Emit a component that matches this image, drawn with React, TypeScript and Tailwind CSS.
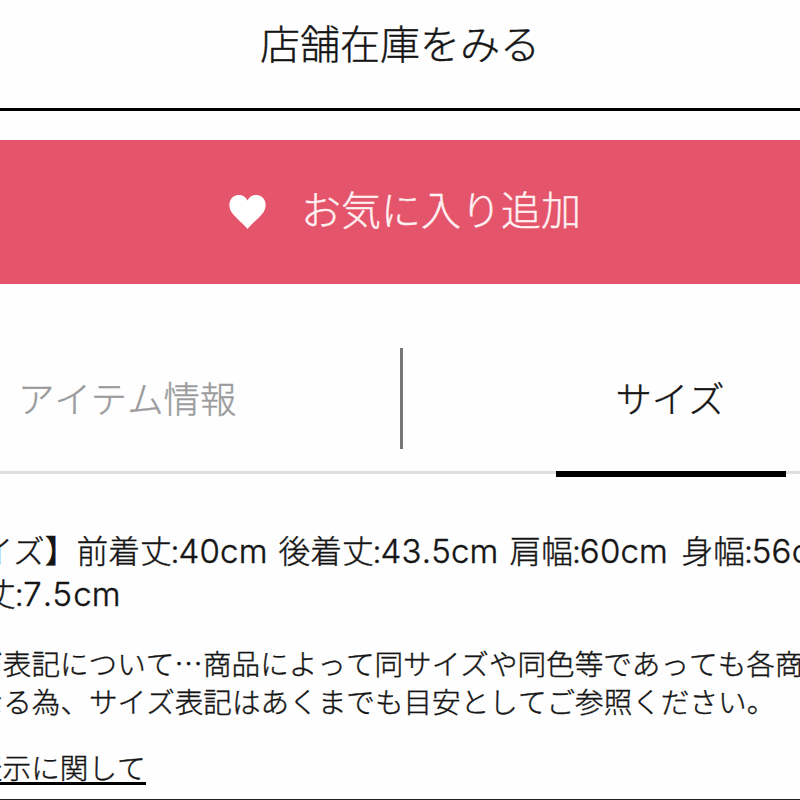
import React from 'react'

const sizeList = [
  { id: '1', label: '前着丈', value: '40cm', width: 'w-[202px]' },
  { id: '2', label: '後着丈', value: '43.5cm', width: 'w-[231px]' },
  { id: '3', label: '肩幅', value: '60cm', width: 'w-[172px]' },
  { id: '4', label: '身幅', value: '56cm', width: 'w-[172px]' },
]

function FavoriteButton() {
  return (
    <button className="mt-[29px] flex h-[143.5px] w-full items-center bg-[#e4546a] pl-[229px] text-[40px] font-light leading-[60px] text-[#fff0f2]">
      <svg className="h-[34px] w-[37px] text-white" viewBox="0 0 37 34" fill="currentColor">
        <path d="M18.5 34C15 29.500 8 24 3.500 18.500C0 14 -.3 9 1.300 5.500C3.200 1.500 6.500 0 10 0C14 0 17 2 18.500 5.500C20 2 23 0 27 0C30.500 0 33.800 1.500 35.700 5.500C37.300 9 37 14 33.500 18.500C29 24 22 29.500 18.500 34Z" />
      </svg>
      <span className="mb-[7px] ml-[35px]">お気に入り追加</span>
    </button>
  )
}

function Tabs() {
  return (
    <div className="mt-[64.5px] flex h-[126px] border-b-[3px] border-[#e0e0e0] text-[36.4px] font-light leading-[54px]">
      <div className="w-[400px] pl-[18px] pt-[22px] text-[#9b9b9d]">アイテム情報</div>
      <div className="h-[101px] w-[3px] bg-[#777]" />
      <div className="ml-[153px] h-[129px] w-[230px] border-b-[6px] border-black pr-[2px] pt-[22px] text-center">サイズ</div>
    </div>
  )
}

function App() {
  return (
    <main
      lang="ja"
      className="flex h-[800px] w-[800px] flex-col overflow-hidden whitespace-nowrap border-b border-[#222] bg-[#fefefe] font-['Noto_Sans_CJK_JP',sans-serif] text-[#151515] [-webkit-text-stroke:0.4px] [font-kerning:none]"
    >
      <div className="h-[111px] border-b-[3px] border-black pt-[11.5px] text-center text-[40px] font-light leading-[60px]">
        店舗在庫をみる
      </div>
      <FavoriteButton />
      <Tabs />
      <div className="ml-[-82px] mt-[56px] font-[Inter,'Noto_Sans_CJK_JP',sans-serif] text-[31.7px] font-light leading-[43px]">
        <div className="flex">
          <span className="w-[158.500px] shrink-0">【サイズ】</span>
          {sizeList.map((size) => (
            <span key={size.id} className={`${size.width} shrink-0`}>
              {size.label}
              <span className="-ml-px">:</span>
              <span className="-ml-px text-[33px] leading-none tracking-[0.2px]">{size.value}</span>
            </span>
          ))}
        </div>
        <div className="ml-[66px]">
          丈<span className="-ml-px">:</span>
          <span className="-ml-[2px] text-[33px] leading-none tabular-nums">7.5cm</span>
        </div>
      </div>
      <div className="ml-[-83px] mt-[28px] text-[28.6px] font-light leading-[38px]">
        <p>サイズ表記について…商品によって同サイズや同色等であっても各商品</p>
        <p className="ml-[29px]">異なる為、サイズ表記はあくまでも目安としてご参照ください。</p>
      </div>
      <div className="ml-[-26px] mt-[28px] flex">
        <a className="h-[37px] border-b-[3px] border-black text-[28.6px] font-light leading-[38px]">表示に関して</a>
      </div>
    </main>
  )
}

export default App
